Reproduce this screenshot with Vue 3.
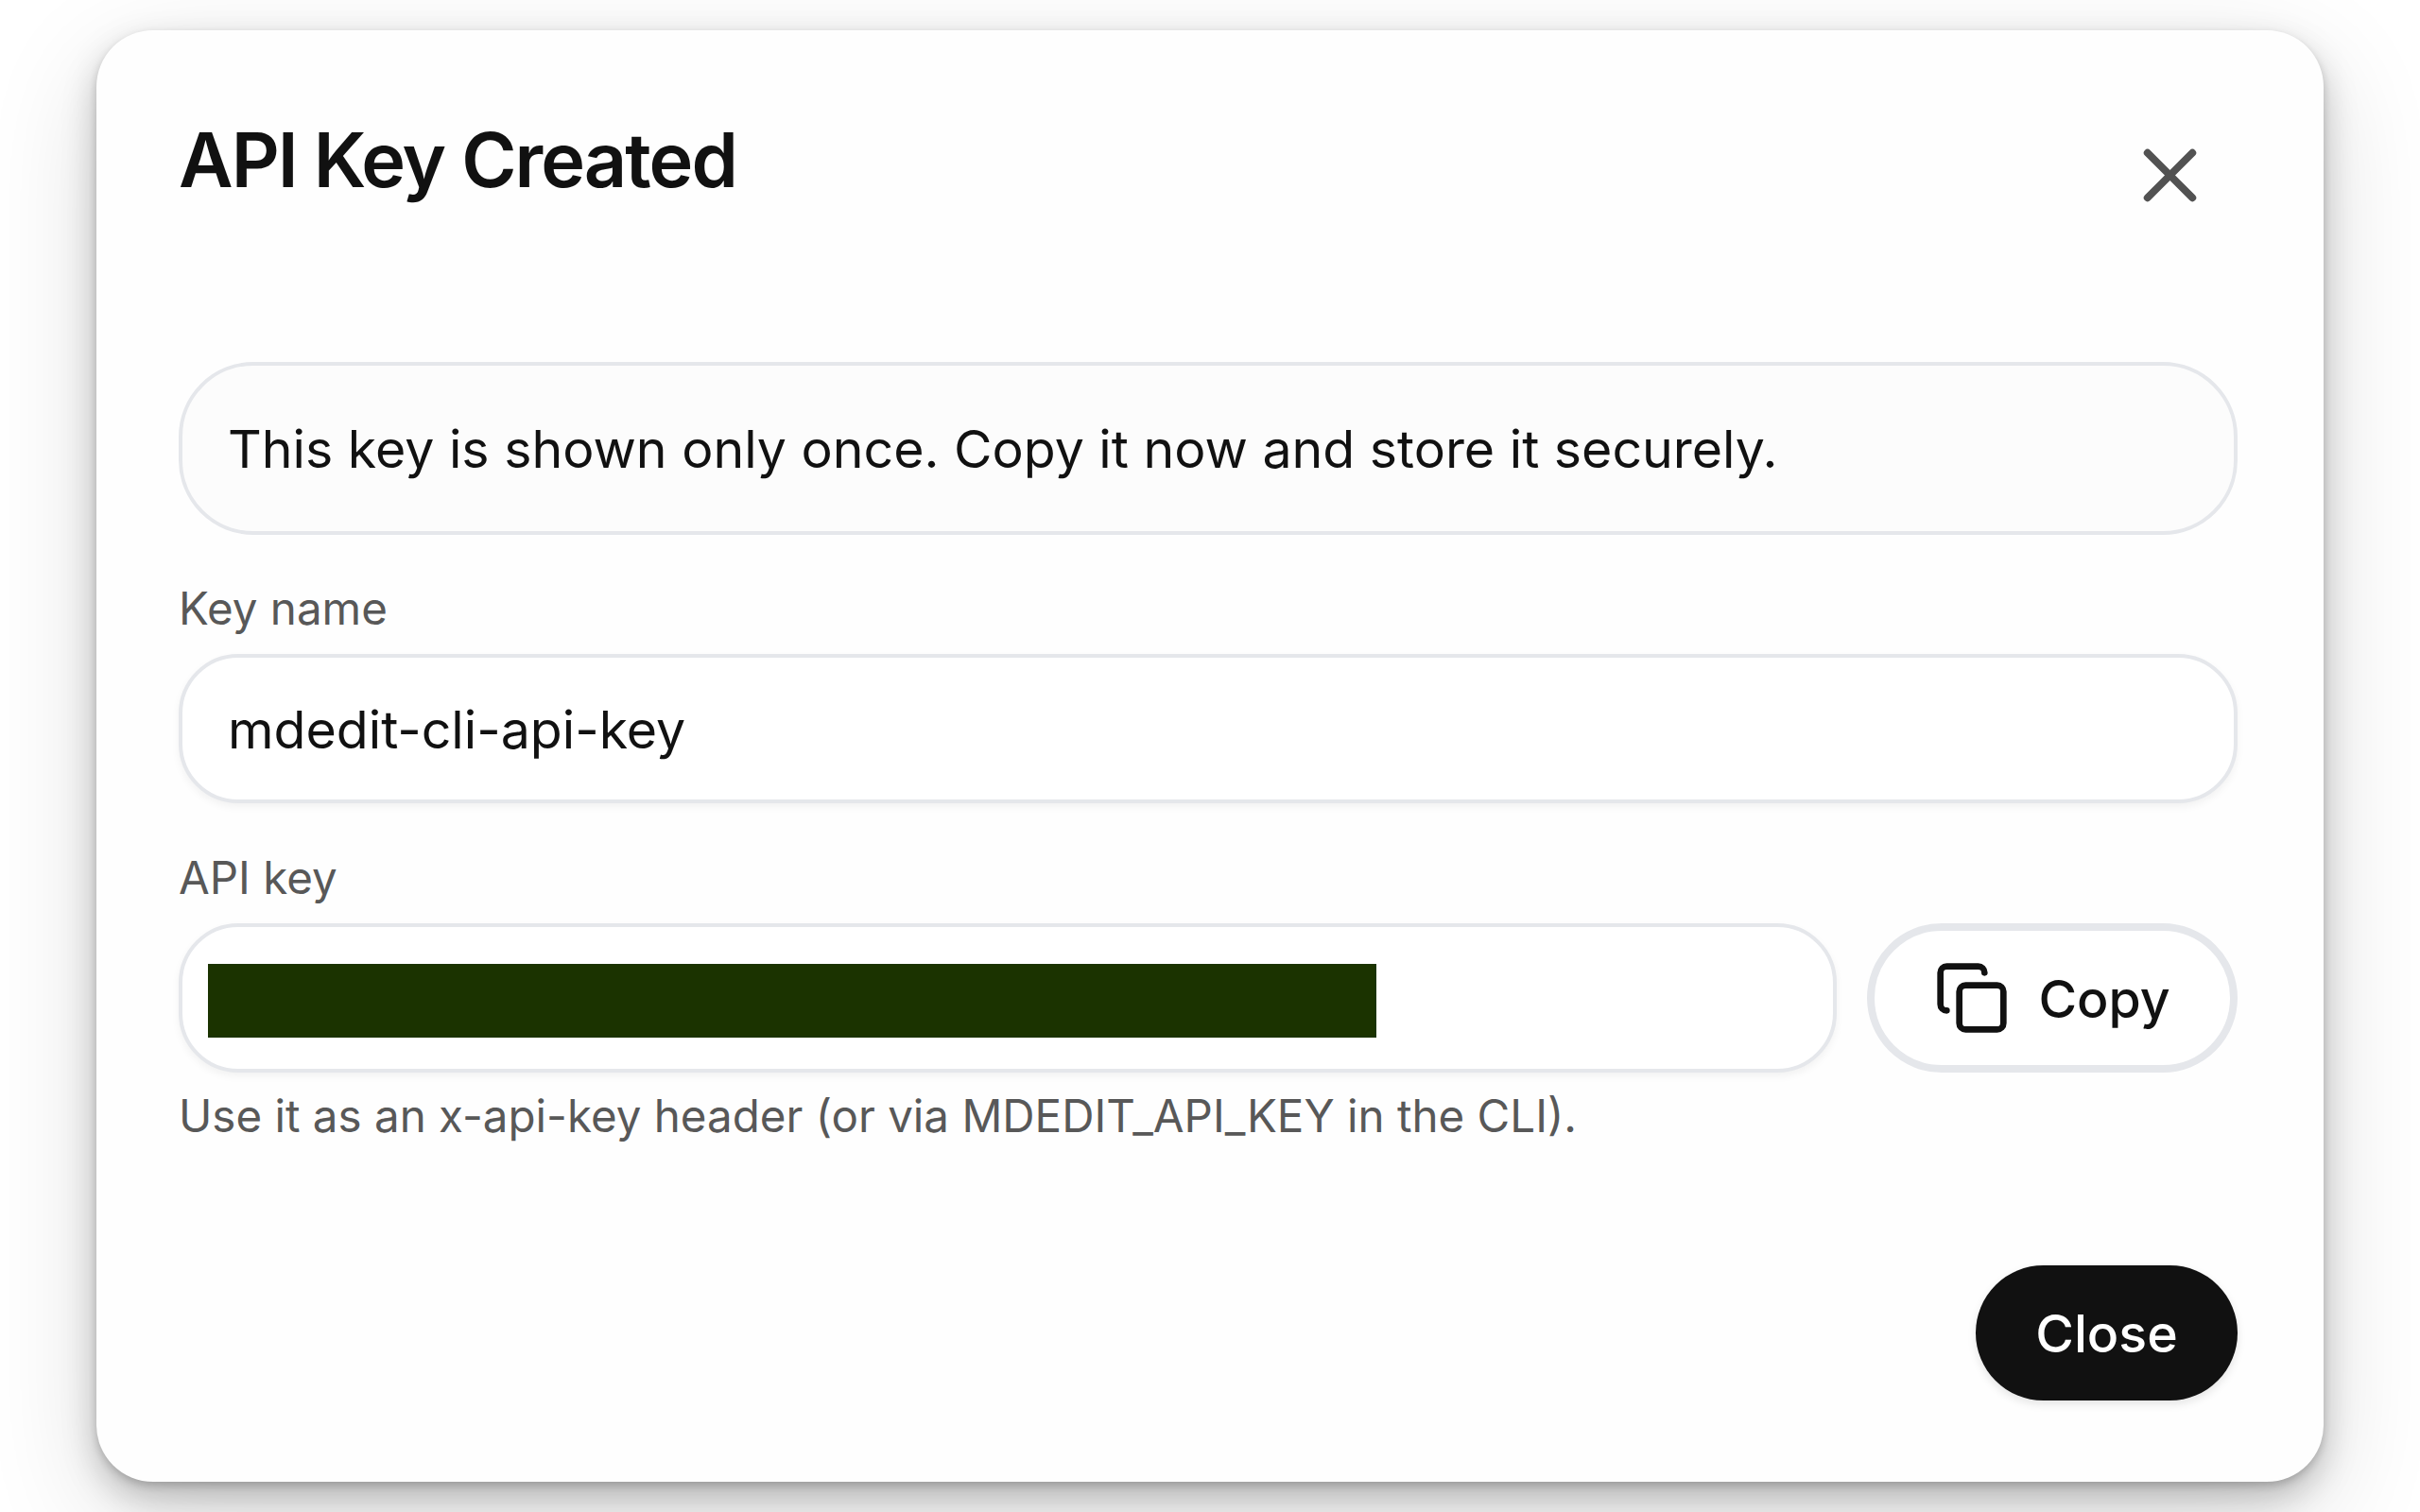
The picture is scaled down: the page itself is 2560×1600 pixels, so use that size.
<template>
  <main class="page">
    <section class="dialog" role="dialog" aria-labelledby="dialog-title">
      <header class="head">
        <h2 id="dialog-title" class="title">API Key Created</h2>
        <button class="dismiss" type="button" aria-label="Dismiss">
          <svg class="x-icon" viewBox="0 0 24 24">
            <path d="M18 6 6 18" />
            <path d="m6 6 12 12" />
          </svg>
        </button>
      </header>

      <div class="notice">This key is shown only once. Copy it now and store it securely.</div>

      <div class="label">Key name</div>
      <div class="field">{{ keyName }}</div>

      <div class="label">API key</div>
      <div class="key-row">
        <div class="field secret">
          <span class="redacted"></span>
        </div>
        <button class="copy" type="button">
          <svg class="copy-icon" viewBox="0 0 24 24">
            <rect x="8" y="8" width="14" height="14" rx="2" ry="2" />
            <path d="M4 16c-1.1 0-2-.9-2-2V4c0-1.1.9-2 2-2h10c1.1 0 2 .9 2 2" />
          </svg>
          <span>Copy</span>
        </button>
      </div>
      <p class="help">Use it as an x-api-key header (or via MDEDIT_API_KEY in the CLI).</p>

      <footer class="foot">
        <button class="close" type="button">Close</button>
      </footer>
    </section>
  </main>
</template>

<script setup>
import { ref } from 'vue';

const keyName = ref('mdedit-cli-api-key');
</script>

<style>
body {
  margin: 0;
  background: #fff;
}
</style>

<style scoped>
.page {
  box-sizing: border-box;
  height: 1600px;
  padding: 32px 102px;
  overflow: hidden;
}
.dialog {
  box-sizing: border-box;
  height: 1536px;
  padding: 89px 91px 0 87px;
  border-radius: 60px;
  background: #fefefe;
  color: #111;
  font-family: Inter, sans-serif;
  font-size: 55.43px;
  box-shadow:
    0 4px 8px rgba(0, 0, 0, 0.17),
    0 16px 36px rgba(0, 0, 0, 0.22),
    0 36px 120px rgba(0, 0, 0, 0.14);
}
button {
  margin: 0;
  padding: 0;
  border: 0;
  font: inherit;
  color: inherit;
}
svg {
  fill: none;
  stroke: currentColor;
  stroke-width: 2;
  stroke-linecap: round;
  stroke-linejoin: round;
}
.head {
  display: flex;
  justify-content: space-between;
  align-items: flex-start;
  height: 262px;
}
.title {
  margin: 0;
  font-size: 79.2px;
  line-height: 96px;
  font-weight: 600;
  letter-spacing: -0.025em;
}
.dismiss {
  display: flex;
  align-items: center;
  justify-content: center;
  width: 143px;
  height: 142px;
  margin-top: -7px;
  background: none;
  color: #525252;
}
.x-icon {
  width: 95px;
  height: 95px;
}
.notice {
  box-sizing: border-box;
  display: flex;
  align-items: center;
  height: 183px;
  padding: 0 48px;
  border: 4px solid #e5e7eb;
  border-radius: 79px;
  background: #fcfcfc;
}
.label {
  margin: 44px 0 14px;
  font-size: 47.5px;
  line-height: 68px;
  color: #585858;
}
.field {
  box-sizing: border-box;
  display: flex;
  align-items: center;
  height: 158px;
  padding: 0 48px;
  border: 4px solid #e5e7eb;
  border-radius: 63px;
  background: #fff;
  box-shadow: 0 4px 8px rgba(0, 0, 0, 0.05);
}
.field + .label {
  margin-top: 45px;
}
.key-row {
  display: flex;
  gap: 32px;
}
.secret {
  flex: 1;
  padding: 0 27px;
}
.redacted {
  width: 1236px;
  height: 78px;
  margin-top: 6px;
  background: #1b3300;
}
.copy {
  box-sizing: border-box;
  display: flex;
  align-items: center;
  justify-content: center;
  gap: 30px;
  width: 392px;
  height: 158px;
  border: 8px solid #e5e7eb;
  border-radius: 79px;
  background: #fff;
  font-weight: 500;
}
.copy-icon {
  width: 80px;
  height: 80px;
}
.help {
  margin: 12px 0 0;
  font-size: 47.5px;
  line-height: 68px;
  color: #585858;
}
.foot {
  display: flex;
  justify-content: flex-end;
  margin-top: 124px;
}
.close {
  width: 277px;
  height: 143px;
  border-radius: 72px;
  background: #111;
  color: #fff;
  font-weight: 500;
  box-shadow: 0 4px 10px rgba(0, 0, 0, 0.1);
}
</style>
